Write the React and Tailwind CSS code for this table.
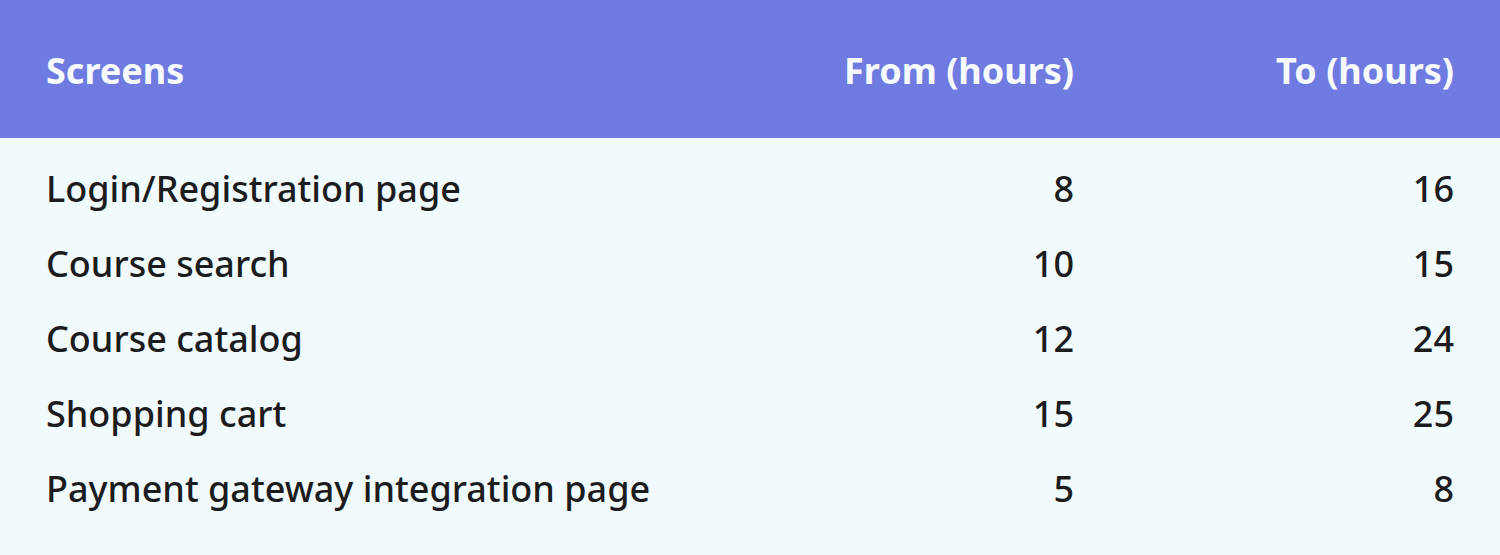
const rows = [
    ["Login/Registration page", 8, 16],
    ["Course search", 10, 15],
    ["Course catalog", 12, 24],
    ["Shopping cart", 15, 25],
    ["Payment gateway integration page", 5, 8],
];

export default function App() {
    return (
        <div className="w-[1500px] h-[555px] bg-[#f1fafd] font-['Noto_Sans',sans-serif] text-[#1c1c1c]">
            <div className="h-[138px] bg-[#6f7be0] flex items-center px-[46px] text-[#f7fbff] font-bold text-[36px] pt-[4px]">
                <div className="flex-1">Screens</div>
                <div className="w-[300px] text-right">From (hours)</div>
                <div className="w-[380px] text-right">To (hours)</div>
            </div>
            <div className="pt-[13px] px-[46px]">
                {rows.map(([name, from, to]) => (
                    <div key={name} className="h-[75px] flex items-center font-medium text-[36px]">
                        <div className="flex-1">{name}</div>
                        <div className="w-[300px] text-right">{from}</div>
                        <div className="w-[380px] text-right">{to}</div>
                    </div>
                ))}
            </div>
        </div>
    );
}
